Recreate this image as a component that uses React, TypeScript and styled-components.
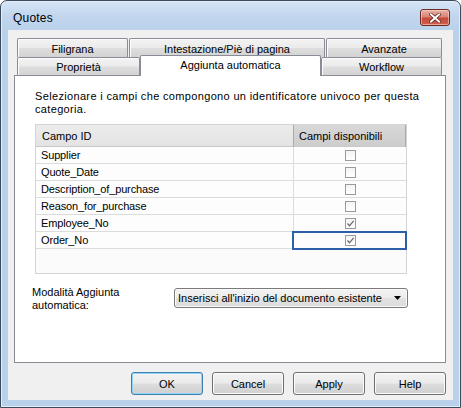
import React from "react";
import styled, { createGlobalStyle } from "styled-components";

const Global = createGlobalStyle`
  html, body { margin: 0; padding: 0; background: #ffffff; }
  body { font-family: "Liberation Sans", Arial, sans-serif; }
  * { box-sizing: border-box; }
`;

const Frame = styled.div`
  width: 461px;
  height: 408px;
  border: 1px solid #3b4a5c;
  border-radius: 7px 7px 0 0;
  background: linear-gradient(#d6e5f5 0px, #c2d7ee 14px, #b9d1ea 30px, #b9d1ea 100%);
  display: flex;
  flex-direction: column;
  padding: 0 7px 7px 7px;
  box-shadow: inset 0 0 0 1px #e4eef9;
`;

const TitleBar = styled.div`
  height: 29px;
  display: flex;
  align-items: center;
  justify-content: space-between;
  padding: 4px 3px 0 5px;
`;

const Title = styled.span`
  font-family: "Liberation Sans", Arial, sans-serif;
  font-size: 12px;
  letter-spacing: 0.2px;
  color: #000;
`;

const CloseButton = styled.div`
  width: 30px;
  height: 17px;
  border: 1px solid #6e2a22;
  border-radius: 3px;
  background: linear-gradient(#eab2a8 0%, #d98476 45%, #c5493a 55%, #cf6150 100%);
  box-shadow: inset 0 0 0 1px rgba(255, 220, 210, 0.55);
  display: flex;
  align-items: center;
  justify-content: center;
`;

const Client = styled.div`
  flex: 1;
  background: #f0f0f0;
  display: flex;
  flex-direction: column;
  padding: 8px 7px 5px 6px;
`;

const TabRow = styled.div<{ $h: number }>`
  display: flex;
  gap: ${(p) => (p.$h === 19 ? 1 : 0)}px;
  padding-left: 3px;
  height: ${(p) => p.$h}px;
`;

const Tab = styled.div<{ $w: number }>`
  width: ${(p) => p.$w}px;
  height: 100%;
  border: 1px solid #898c95;
  border-bottom: none;
  border-radius: 2px 2px 0 0;
  background: linear-gradient(#f3f3f3 0%, #ebebeb 48%, #dedede 52%, #d3d3d3 100%);
  box-shadow: inset 1px 1px 0 #fcfcfc;
  display: flex;
  align-items: center;
  justify-content: center;
  font-size: 11px;
  color: #000;
  padding-top: 1px;
`;

const ActiveTab = styled.div<{ $w: number }>`
  position: relative;
  z-index: 1;
  width: ${(p) => p.$w}px;
  height: 21px;
  margin-top: -2px;
  border: 1px solid #898c95;
  border-bottom: none;
  border-radius: 2px 2px 0 0;
  background: #ffffff;
  display: flex;
  align-items: flex-start;
  justify-content: center;
  padding-top: 3px;
  font-size: 11px;
  color: #000;
`;

const Panel = styled.div`
  width: 432px;
  height: 288px;
  border: 1px solid #898c95;
  background: #ffffff;
  padding: 14px 20px 0 20px;
  display: flex;
  flex-direction: column;
`;

const Description = styled.p`
  margin: 0;
  font-size: 11px;
  letter-spacing: 0.34px;
  line-height: 13px;
  color: #000;
  white-space: nowrap;
`;

const Grid = styled.div`
  margin-top: 8px;
  width: 372px;
  height: 150px;
  border: 1px solid #d5d5d5;
  background: #fbfbfb;
  display: grid;
  grid-template-columns: 257px 113px;
  grid-template-rows: 22px;
  grid-auto-rows: 17px;
  align-content: start;
`;

const HeaderCell = styled.div<{ $dark?: boolean }>`
  height: 22px;
  border-bottom: 1px solid #c9c9c9;
  background: ${(p) => (p.$dark ? "linear-gradient(#d8d8d8, #cdcdcd)" : "linear-gradient(#ececec, #e3e3e3)")};
  ${(p) => (p.$dark ? "border-left: 1px solid #a9a9a9; border-right: 1px solid #a9a9a9;" : "")}
  display: flex;
  align-items: center;
  padding-left: ${(p) => (p.$dark ? 5 : 6)}px;
  font-size: 11px;
  color: #000;
`;

const Cell = styled.div<{ $check?: boolean; $selected?: boolean }>`
  height: 17px;
  border-bottom: 1px solid #dcdcdc;
  background: #fdfdfd;
  ${(p) => (p.$check ? "border-left: 1px solid #dcdcdc;" : "")}
  display: flex;
  align-items: center;
  justify-content: ${(p) => (p.$check ? "center" : "flex-start")};
  padding-left: ${(p) => (p.$check ? 0 : 5)}px;
  font-size: 11px;
  letter-spacing: -0.15px;
  color: #000;
  ${(p) => (p.$selected ? "outline: 2px solid #2d5ea8; outline-offset: -1px; position: relative; z-index: 1;" : "")}
`;

const Box = styled.div`
  width: 11px;
  height: 11px;
  border: 1px solid #9a9a9a;
  background: linear-gradient(#f4f4f4, #ffffff);
  display: flex;
  align-items: center;
  justify-content: center;
`;

const ModeRow = styled.div`
  margin-top: 12px;
  margin-left: -3px;
  display: flex;
  align-items: flex-start;
`;

const ModeLabel = styled.div`
  width: 142px;
  font-size: 11px;
  line-height: 13px;
  color: #000;
`;

const Select = styled.div`
  margin-top: 2px;
  width: 234px;
  height: 20px;
  border: 1px solid #7a7a7a;
  border-radius: 3px;
  background: linear-gradient(#f3f3f3 0%, #ececec 48%, #e1e1e1 52%, #dcdcdc 100%);
  box-shadow: inset 0 0 0 1px #fafafa;
  display: flex;
  align-items: center;
  justify-content: space-between;
  padding: 0 6px 0 3px;
  font-size: 11px;
  color: #000;
`;

const ButtonRow = styled.div`
  margin-top: 9px;
  display: flex;
  justify-content: flex-end;
  gap: 9px;
  width: 432px;
`;

const Button = styled.div<{ $default?: boolean }>`
  width: 72px;
  height: 23px;
  border: 1px solid ${(p) => (p.$default ? "#3c7fb1" : "#707070")};
  border-radius: 3px;
  background: linear-gradient(#f2f2f2 0%, #ebebeb 48%, #dddddd 52%, #cfcfcf 100%);
  box-shadow: inset 0 0 0 1px ${(p) => (p.$default ? "#8fd6f5" : "#fbfbfb")};
  display: flex;
  align-items: center;
  justify-content: center;
  font-size: 11px;
  color: #000;
`;

const Check = () => (
  <svg width="9" height="9" viewBox="0 0 9 9">
    <polyline points="1.5,4.5 3.5,6.8 7.6,1.8" fill="none" stroke="#6a6a6a" strokeWidth="1.3" />
  </svg>
);

const rows: { name: string; checked: boolean }[] = [
  { name: "Supplier", checked: false },
  { name: "Quote_Date", checked: false },
  { name: "Description_of_purchase", checked: false },
  { name: "Reason_for_purchase", checked: false },
  { name: "Employee_No", checked: true },
  { name: "Order_No", checked: true },
];

export default function App() {
  return (
    <>
      <Global />
      <Frame>
        <TitleBar>
          <Title>Quotes</Title>
          <CloseButton>
            <svg width="12" height="10" viewBox="0 0 12 10">
              <path d="M2 1.5 L10 8.5 M10 1.5 L2 8.5" stroke="#5a1f18" strokeWidth="3.4" strokeLinecap="square" />
              <path d="M2 1.5 L10 8.5 M10 1.5 L2 8.5" stroke="#ffffff" strokeWidth="2" strokeLinecap="square" />
            </svg>
          </CloseButton>
        </TitleBar>
        <Client>
          <TabRow $h={19}>
            <Tab $w={111}>Filigrana</Tab>
            <Tab $w={196}>Intestazione/Piè di pagina</Tab>
            <Tab $w={116}>Avanzate</Tab>
          </TabRow>
          <TabRow $h={18}>
            <Tab $w={123}>Proprietà</Tab>
            <ActiveTab $w={181}>Aggiunta automatica</ActiveTab>
            <Tab $w={121}>Workflow</Tab>
          </TabRow>
          <Panel>
            <Description>
              Selezionare i campi che compongono un identificatore univoco per questa
              <br />
              categoria.
            </Description>
            <Grid>
              <HeaderCell>Campo ID</HeaderCell>
              <HeaderCell $dark>Campi disponibili</HeaderCell>
              {rows.map((r, i) => (
                <React.Fragment key={r.name}>
                  <Cell>{r.name}</Cell>
                  <Cell $check $selected={i === rows.length - 1}>
                    <Box>{r.checked && <Check />}</Box>
                  </Cell>
                </React.Fragment>
              ))}
            </Grid>
            <ModeRow>
              <ModeLabel>
                Modalità Aggiunta
                <br />
                automatica:
              </ModeLabel>
              <Select>
                <span>Inserisci all'inizio del documento esistente</span>
                <svg width="7" height="4" viewBox="0 0 7 4">
                  <polygon points="0,0 7,0 3.5,4" fill="#000" />
                </svg>
              </Select>
            </ModeRow>
          </Panel>
          <ButtonRow>
            <Button $default>OK</Button>
            <Button>Cancel</Button>
            <Button>Apply</Button>
            <Button>Help</Button>
          </ButtonRow>
        </Client>
      </Frame>
    </>
  );
}
